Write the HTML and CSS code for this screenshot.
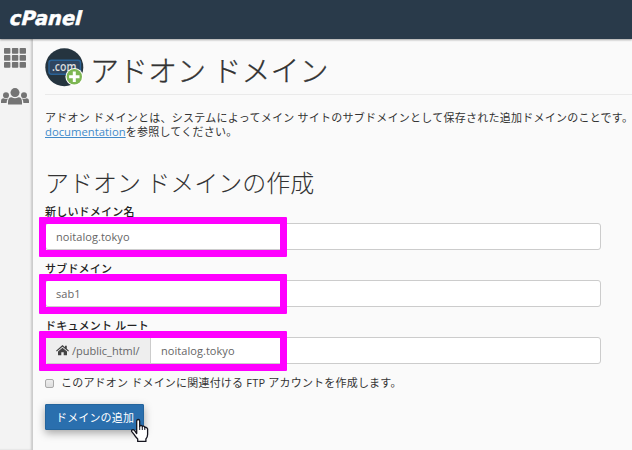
FILE: index.html
```html
<!DOCTYPE html>
<html lang="ja">
<head>
<meta charset="utf-8">
<title>cPanel</title>
<link rel="stylesheet" href="styles.css">
</head>
<body>
<header class="topbar">
  <svg class="logo" width="90" height="39" viewBox="0 0 90 39"><text transform="translate(8.500 25.300) skewX(-14)" textLength="72" lengthAdjust="spacingAndGlyphs">cPanel</text></svg>
</header>
<div class="layout">
  <nav class="sidebar">
    <svg width="22" height="20" viewBox="0 0 22 20" fill="#747474">
      <rect width="6.400" height="5.800" rx=".8"/><rect x="7.900" width="6.400" height="5.800" rx=".8"/><rect x="15.600" width="6.400" height="5.800" rx=".8"/>
      <rect y="7" width="6.400" height="5.800" rx=".8"/><rect x="7.900" y="7" width="6.400" height="5.800" rx=".8"/><rect x="15.600" y="7" width="6.400" height="5.800" rx=".8"/>
      <rect y="14" width="6.400" height="5.800" rx=".8"/><rect x="7.900" y="14" width="6.400" height="5.800" rx=".8"/><rect x="15.600" y="14" width="6.400" height="5.800" rx=".8"/>
    </svg>
    <svg width="28" height="17" viewBox="0 0 28 17" fill="#747474">
      <circle cx="5" cy="7.200" r="3"/><circle cx="23" cy="7.200" r="3"/>
      <path d="M0 15v-1.500q0-3.200 2.500-3.200 2.500 1.200 4.500.2-1.400 1.700-1.400 4.500zM28 15v-1.500q0-3.200-2.500-3.200-2.500 1.200-4.500.2 1.400 1.700 1.400 4.500z"/>
      <circle cx="14" cy="4.600" r="4.500"/>
      <path d="M7 16.400v-2.400q0-4.600 3.500-4.700 3.500 2 7 0 3.500.1 3.500 4.700v2.400z"/>
    </svg>
  </nav>
  <main class="content">
    <div class="title">
      <svg width="39" height="40" viewBox="0 0 39 40">
        <circle cx="19.300" cy="19.300" r="19" fill="#25343f"/>
        <rect x="4" y="12.300" width="31.500" height="14" rx="2.500" fill="#2f4560" stroke="#2a6296" stroke-width="1.400"/>
        <text x="7" y="22.600" class="com" textLength="24.500" lengthAdjust="spacingAndGlyphs">.com</text>
        <circle cx="29.300" cy="28.800" r="8.900" fill="#fff"/>
        <circle cx="29.300" cy="28.800" r="7.700" fill="#7db653"/>
        <path d="M29.300 23.600v10.400M24.100 28.800h10.400" stroke="#fff" stroke-width="3"/>
      </svg>
      <h1>アドオン ドメイン</h1>
    </div>
    <p class="intro">アドオン ドメインとは、システムによってメイン サイトのサブドメインとして保存された追加ドメインのことです。<br><a href="#">documentation</a>を参照してください。</p>
    <h2>アドオン ドメインの作成</h2>
    <form>
      <div class="field">
        <label>新しいドメイン名</label>
        <div class="control marked"><span class="value">noitalog.tokyo</span></div>
      </div>
      <div class="field">
        <label>サブドメイン</label>
        <div class="control marked"><span class="value">sab1</span></div>
      </div>
      <div class="field">
        <label>ドキュメント ルート</label>
        <div class="control marked">
          <span class="addon"><svg width="13" height="11" viewBox="0 0 13 11" fill="#444"><path d="M6.500 0 9 2.200V.7h1.800v3.100L13 5.700l-.8.900L6.500 1.700.8 6.600 0 5.700z"/><path d="M6.500 2.800 11 6.600V10.200H7.700V7.200H5.300v3H2V6.600z"/></svg>/public_html/</span>
          <span class="value">noitalog.tokyo</span>
        </div>
      </div>
      <div class="check"><i class="box"></i><span>このアドオン ドメインに関連付ける FTP アカウントを作成します。</span></div>
      <div class="submit"><span>ドメインの追加</span>
        <svg class="cursor" width="20" height="25" viewBox="0 0 20 25"><path d="M6.700 15.500V3.200Q6.700 1.500 8.200 1.500T9.700 3.200V8.500Q9.900 7.200 11.100 7.300T12.300 8.800Q12.600 7.900 13.700 8.100T14.800 9.800Q15.100 9 16.100 9.300T17.600 11V16.500Q17.600 19 15.900 21V23.400H7.700V21Q5.500 18.800 4 16.300L1.800 13.700Q1.100 12.500 2.200 11.900T4.600 12.600z" fill="#fff" stroke="#15151f" stroke-width="1.300" stroke-linejoin="round"/><path d="M9.700 8v4M12.300 8.800v3.200M14.800 9.800v2.200" stroke="#15151f" stroke-width="1"/></svg>
      </div>
    </form>
  </main>
</div>
</body>
</html>
```
FILE: styles.css
```css
*, *::after { box-sizing: border-box; }
body {
  margin: 0;
  height: 450px;
  overflow: hidden;
  display: flex;
  flex-direction: column;
  background: #fafafa;
  color: #333;
  font: 11px/14px "Open Sans", "Noto Sans CJK JP", sans-serif;
}
.topbar { height: 39px; flex: none; background: #293a4a; box-shadow: 0 1px 2px rgba(0,0,0,.35); position: relative; }
.logo { display: block; }
.logo text { font: bold 19.500px "DejaVu Sans", sans-serif; fill: #fff; stroke: #fff; stroke-width: .5px; }
.layout { display: flex; flex: 1; min-height: 0; }
.sidebar {
  width: 33px;
  flex: none;
  background: #f3f3f3;
  box-shadow: inset -2px 0 2px rgba(0,0,0,.17);
  display: flex;
  flex-direction: column;
  align-items: flex-start;
  gap: 20px;
  padding: 9px 0 0 1px;
}
.sidebar svg { flex: none; }
.sidebar svg:first-child { margin-left: 3px; }
.content { flex: 1; min-width: 0; padding: 9px 0 0 12px; }
.title { display: flex; height: 47px; gap: 6px; border-bottom: 1px solid #eaeaea; }
.com { font: 600 12px "Open Sans", sans-serif; fill: #ddd; }
h1, h2 { margin: 0; font-family: "Noto Sans CJK JP", sans-serif; font-weight: 300; white-space: nowrap; }
h1 { font-size: 29px; line-height: 43px; -webkit-text-stroke: .3px #333; }
.intro { margin: 16px 0 0; white-space: nowrap; letter-spacing: .25px; }
.intro a { color: #428bca; font-size: 11.300px; letter-spacing: 0; }
h2 { font-size: 24px; line-height: 34px; margin-top: 26px; }
form { margin-top: 6px; }
.field { height: 57px; }
label { display: block; height: 18px; line-height: 14px; font-weight: 500; color: #222; white-space: nowrap; letter-spacing: .2px; }
.control {
  width: 556px;
  height: 27px;
  position: relative;
  display: flex;
  background: #fff;
  border: 1px solid #ccc;
  border-radius: 3px;
  color: #666;
  line-height: 26px;
}
.marked::after { content: ""; position: absolute; left: -7px; top: -7px; width: 248px; height: 40px; border: 7px solid #f0f; border-radius: 1px; }
.value { padding-left: 10px; letter-spacing: .05px; }
.addon { width: 105px; padding-left: 10px; display: flex; align-items: center; gap: 3px; background: #eee; border-right: 1px solid #ccc; line-height: 24px; }
.check { display: flex; align-items: center; height: 14px; gap: 7px; white-space: nowrap; letter-spacing: .2px; }
.box { width: 9px; height: 9px; border: 1px solid #aaa; border-radius: 2px; background: linear-gradient(#eee, #ddd); }
.submit {
  position: relative;
  width: 99px;
  height: 26px;
  margin-top: 14px;
  padding-left: 10px;
  line-height: 25px;
  letter-spacing: .15px;
  background: #2a6fae;
  border: 1px solid #24649c;
  border-radius: 1px;
  box-shadow: 0 3px 9px rgba(0,0,0,.35);
  color: #fff;
  white-space: nowrap;
}
.cursor { position: absolute; left: 84px; top: 13px; }
```
